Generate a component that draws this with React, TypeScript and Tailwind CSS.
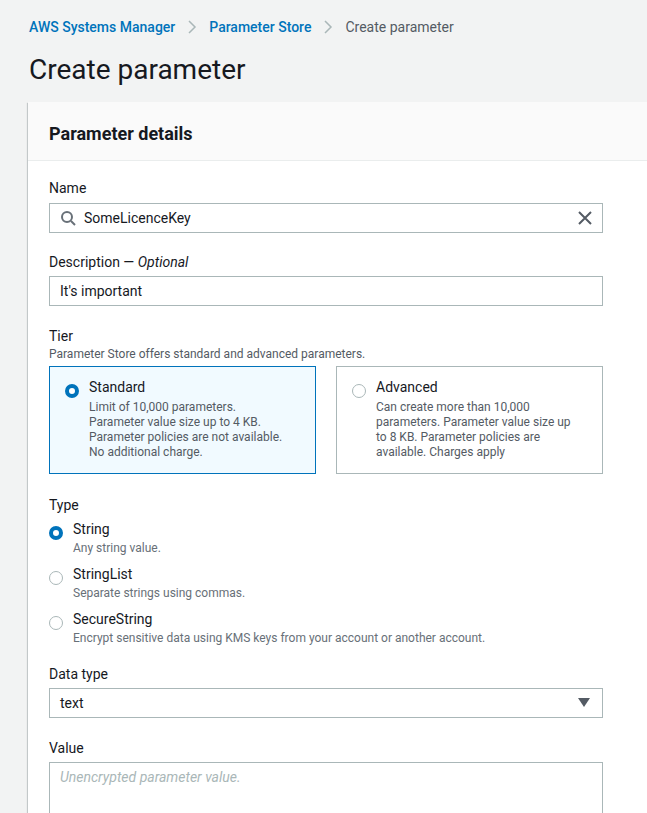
import React from 'react';

const font = { fontFamily: 'Roboto, "Liberation Sans", sans-serif' };

const Radio = ({ checked }: { checked: boolean }) =>
  checked ? (
    <span className="box-border inline-block h-[14px] w-[14px] shrink-0 rounded-full border-[4px] border-[#0073bb] bg-white" />
  ) : (
    <span className="box-border inline-block h-[14px] w-[14px] shrink-0 rounded-full border border-[#aab7b8] bg-white" />
  );

const TypeOption = ({ label, hint, checked }: { label: string; hint: string; checked: boolean }) => (
  <div className="flex gap-[10px]">
    <div className="pt-[4px]">
      <Radio checked={checked} />
    </div>
    <div>
      <div className="text-[14px] leading-[20px] text-[#16191f]">{label}</div>
      <div className="mt-[1px] text-[12px] leading-[16px] text-[#687078]">{hint}</div>
    </div>
  </div>
);

const TierCard = ({ title, lines, checked }: { title: string; lines: string[]; checked: boolean }) => (
  <div
    className={
      checked
        ? 'flex gap-[10px] border border-[#0073bb] bg-[#f1faff] px-[15px] pb-[13px] pt-[10px]'
        : 'flex gap-[10px] border border-[#aab7b8] bg-white px-[15px] pb-[13px] pt-[10px]'
    }
  >
    <div className="pt-[4px]">
      <Radio checked={checked} />
    </div>
    <div>
      <div className="text-[14px] leading-[20px] text-[#16191f]">{title}</div>
      <div className="mt-[3px] text-[12px] leading-[15px] text-[#545b64]">
        {lines.map((l) => (
          <div key={l}>{l}</div>
        ))}
      </div>
    </div>
  </div>
);

export default function App() {
  return (
    <div className="min-h-[813px] overflow-hidden bg-[#f2f3f3] pl-[28px]" style={font}>
      {/* Breadcrumbs */}
      <div className="flex items-center gap-[12px] pl-[1px] pt-[17px] text-[14px] leading-[20px]">
        <span className="font-medium text-[#0073bb]">AWS Systems Manager</span>
        <svg width="10" height="14" viewBox="0 0 10 14" fill="none" stroke="#aab7b8" strokeWidth="1.5">
          <path d="M2 1l6 6-6 6" />
        </svg>
        <span className="font-medium text-[#0073bb]">Parameter Store</span>
        <svg width="10" height="14" viewBox="0 0 10 14" fill="none" stroke="#aab7b8" strokeWidth="1.5">
          <path d="M2 1l6 6-6 6" />
        </svg>
        <span className="text-[#545b64]">Create parameter</span>
      </div>

      <h1 className="pl-[1px] pt-[15px] text-[28px] leading-[36px] font-normal text-[#16191f]">Create parameter</h1>

      {/* Card */}
      <div className="mt-[14px] bg-white shadow-[0_1px_1px_0_rgba(0,28,36,0.3),1px_1px_1px_0_rgba(0,28,36,0.15),-1px_1px_1px_0_rgba(0,28,36,0.15)]">
        <div className="h-[59px] border-b border-[#eaeded] bg-[#fafafa] pl-[21px] pt-[21px]">
          <div className="text-[18px] font-bold leading-[22px] text-[#16191f]">Parameter details</div>
        </div>

        <div className="flex w-[575px] flex-col gap-[20px] pl-[21px] pt-[17px] pb-[40px]">
          {/* Name */}
          <div>
            <div className="mb-[5px] text-[14px] leading-[20px] text-[#16191f]">Name</div>
            <div className="flex h-[30px] items-center border border-[#aab7b8] pl-[10px] pr-[10px]">
              <svg width="16" height="16" viewBox="0 0 16 16" fill="none" stroke="#687078" strokeWidth="2">
                <circle cx="7" cy="7" r="5" />
                <path d="M11 11l4 4" />
              </svg>
              <span className="ml-[8px] flex-1 text-[14px] text-[#16191f]">SomeLicenceKey</span>
              <svg width="14" height="14" viewBox="0 0 14 14" fill="none" stroke="#545b64" strokeWidth="2">
                <path d="M1 1l12 12M13 1L1 13" />
              </svg>
            </div>
          </div>

          {/* Description */}
          <div className="-mt-[1px]">
            <div className="mb-[4px] text-[14px] leading-[20px] text-[#16191f]">
              Description — <i>Optional</i>
            </div>
            <div className="flex h-[30px] items-center border border-[#aab7b8] px-[10px] text-[14px] text-[#16191f]">
              It's important
            </div>
          </div>

          {/* Tier */}
          <div>
            <div className="text-[14px] leading-[20px] text-[#16191f]">Tier</div>
            <div className="mb-[4px] text-[12px] leading-[16px] text-[#545b64]">
              Parameter Store offers standard and advanced parameters.
            </div>
            <div className="grid grid-cols-2 gap-[20px]">
              <TierCard
                checked
                title="Standard"
                lines={[
                  'Limit of 10,000 parameters.',
                  'Parameter value size up to 4 KB.',
                  'Parameter policies are not available.',
                  'No additional charge.',
                ]}
              />
              <TierCard
                checked={false}
                title="Advanced"
                lines={[
                  'Can create more than 10,000',
                  'parameters. Parameter value size up',
                  'to 8 KB. Parameter policies are',
                  'available. Charges apply',
                ]}
              />
            </div>
          </div>

          {/* Type */}
          <div className="pt-[1px]">
            <div className="mb-[4px] text-[14px] leading-[20px] text-[#16191f]">Type</div>
            <div className="flex flex-col gap-[8px]">
              <TypeOption checked label="String" hint="Any string value." />
              <TypeOption checked={false} label="StringList" hint="Separate strings using commas." />
              <TypeOption
                checked={false}
                label="SecureString"
                hint="Encrypt sensitive data using KMS keys from your account or another account."
              />
            </div>
          </div>

          {/* Data type */}
          <div className="-mt-[2px]">
            <div className="mb-[4px] text-[14px] leading-[20px] text-[#16191f]">Data type</div>
            <div className="flex h-[30px] items-center justify-between border border-[#aab7b8] pl-[10px] pr-[12px] text-[14px] text-[#16191f]">
              <span>text</span>
              <svg width="12" height="10" viewBox="0 0 12 10">
                <path d="M0 0h12L6 9z" fill="#545b64" />
              </svg>
            </div>
          </div>

          {/* Value */}
          <div>
            <div className="mb-[4px] text-[14px] leading-[20px] text-[#16191f]">Value</div>
            <div className="h-[80px] border border-[#aab7b8] px-[10px] pt-[4px] text-[14px] italic text-[#aab7b8]">
              Unencrypted parameter value.
            </div>
          </div>
        </div>
      </div>
    </div>
  );
}
